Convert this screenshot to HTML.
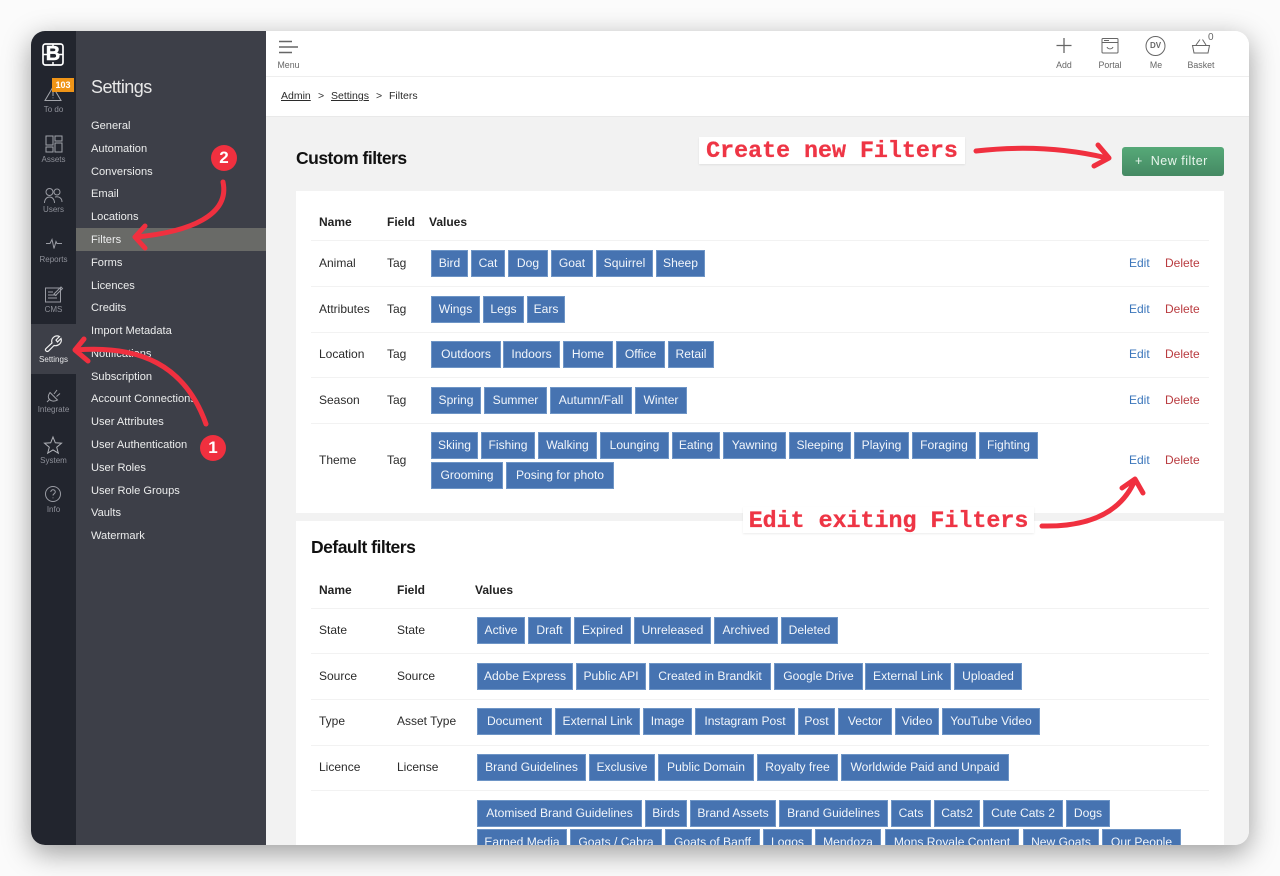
<!DOCTYPE html>
<html><head><meta charset="utf-8"><title>Filters</title>
<style>
*{box-sizing:border-box}
html,body{margin:0;padding:0;width:1280px;height:876px;overflow:hidden;background:#fbfbfb;font-family:"Liberation Sans",sans-serif}
#w{position:absolute;left:31px;top:31px;width:1218px;height:814px;border-radius:14px;box-shadow:0 8px 28px rgba(0,0,0,.38);z-index:0}
#c{position:absolute;left:31px;top:31px;width:1218px;height:814px;border-radius:14px;overflow:hidden;background:#f2f2f2}
#p{position:absolute;left:-31px;top:-31px;width:1280px;height:876px}
.a{position:absolute}
.x{position:absolute;white-space:nowrap;line-height:16px;font-size:12px;color:#2b2b2b}
.n{position:absolute;left:91px;white-space:nowrap;line-height:16px;font-size:11.1px;color:#eceded}
.l{position:absolute;left:31px;width:45px;text-align:center;font-size:8px;line-height:10px;color:#8f919a}
.t{position:absolute;height:27px;background:#4673b1;border:1px solid #6e95c6;color:#f2f6fb;font-size:12.1px;line-height:25px;text-align:center;white-space:nowrap;overflow:hidden}
.h{position:absolute;height:1px;left:311px;width:898px;background:#f2f2f2}
.b{font-weight:bold;color:#222}
.e{color:#3b76bb}.d{color:#b93b3f}
.u{position:absolute;text-align:center;font-size:8.8px;line-height:10px;color:#666}
.r{position:absolute;background:#fff;box-shadow:0 1px 2px rgba(0,0,0,.08);font:bold 23.3px/28px "Liberation Mono",monospace;color:#ee3545;white-space:pre;text-align:center;-webkit-text-stroke:.3px #ee3545}
svg{position:absolute;left:0;top:0;overflow:visible}
</style></head><body>
<div id="w"></div>
<div id="c"><div id="p">
<div class="a" style="left:31px;top:31px;width:45px;height:814px;background:#22252e"></div>
<div class="a" style="left:76px;top:31px;width:190px;height:814px;background:#3d3f48"></div>
<div class="a" style="left:31px;top:324px;width:45px;height:50px;background:#3d3f48"></div>
<div class="a" style="left:76px;top:228px;width:190px;height:23px;background:#696a67"></div>
<div class="a" style="left:266px;top:31px;width:983px;height:46px;background:#fff;border-bottom:1px solid #eeeeee"></div>
<div class="a" style="left:266px;top:77px;width:983px;height:40px;background:#fff;border-bottom:1px solid #e9e9e9"></div>
<div class="a" style="left:296px;top:191px;width:928px;height:322px;background:#fff"></div>
<div class="a" style="left:296px;top:521px;width:928px;height:330px;background:#fff"></div>

<div class="x" style="left:91px;top:76px;font-size:18px;line-height:22px;color:#e8e8e8;letter-spacing:-.55px">Settings</div>
<div class="n" style="top:118px">General</div>
<div class="n" style="top:141px">Automation</div>
<div class="n" style="top:164px">Conversions</div>
<div class="n" style="top:186px">Email</div>
<div class="n" style="top:209px">Locations</div>
<div class="n" style="top:232px">Filters</div>
<div class="n" style="top:255px">Forms</div>
<div class="n" style="top:278px">Licences</div>
<div class="n" style="top:300px">Credits</div>
<div class="n" style="top:323px">Import Metadata</div>
<div class="n" style="top:346px">Notifications</div>
<div class="n" style="top:369px">Subscription</div>
<div class="n" style="top:391px">Account Connections</div>
<div class="n" style="top:414px">User Attributes</div>
<div class="n" style="top:437px">User Authentication</div>
<div class="n" style="top:460px">User Roles</div>
<div class="n" style="top:483px">User Role Groups</div>
<div class="n" style="top:505px">Vaults</div>
<div class="n" style="top:528px">Watermark</div>

<div class="l" style="top:105px">To do</div>
<div class="l" style="top:155px">Assets</div>
<div class="l" style="top:205px">Users</div>
<div class="l" style="top:255px">Reports</div>
<div class="l" style="top:305px">CMS</div>
<div class="l" style="top:355px;color:#e8e8ea">Settings</div>
<div class="l" style="top:405px">Integrate</div>
<div class="l" style="top:456px">System</div>
<div class="l" style="top:505px">Info</div>

<svg width="1280" height="876" fill="none" stroke="#9a9ca4" stroke-width="1">
<rect x="43" y="44" width="20" height="21" rx="2.500" stroke="#fff" stroke-width="1.700"/>
<path d="M43 54.500h4M59 54.500h4M53 44v3M53 62v3" stroke="#fff" stroke-width="1.500"/>
<path d="M53 87l8 13.500h-16zM53 92v4M53 97.500v.8" stroke="#a4a6ac"/>
<path d="M46 136h7v9h-7zM55 136h7v5h-7zM46 147h7v5h-7zM55 143h7v9h-7z" stroke="#a0a2a9"/>
<circle cx="49.500" cy="192" r="3.500"/><circle cx="57" cy="192" r="3"/><path d="M44.500 203c0-8 10-8 10 0M55 197c5-1 7 2 7 5"/>
<path d="M46 243.500h4l2-4 2 9 2-7 1 2h5"/>
<path d="M45.500 288h15v14h-15zM48 292h5M48 295h9M48 298h9M54 294l7-7 1.500 1.500-7 7z"/>
<path d="M52 343C50.500 338.500 55 334.500 59.500 336.500L56 340L57.500 342L61 338.500C62.500 343 58 346.500 54 345.500L48.500 351C46.500 352.500 44.500 350 46 348.500Z" stroke="#f0f0f0" stroke-width="1.200"/>
<path d="M47 402l3-3M50 392.500L57.500 400C54 402 51 401 49.500 399.500S47.500 396 50 392.500ZM54 394l3-4M56.500 396.500l3.500-3" stroke="#a0a2a9"/>
<path d="M53 437l2.300 5.800 6.200.4-4.800 4 1.600 6-5.300-3.300-5.300 3.300 1.600-6-4.800-4 6.200-.4z" stroke="#b0b2b8"/>
<circle cx="53" cy="494" r="7.500"/><path d="M50.800 492c0-3 4.500-3 4.500 0 0 1.700-2.300 1.700-2.300 3.500M53 497.500v.8"/>
<g stroke="#666">
<path d="M279 41.500h13M279 47h19M279 52.500h13" stroke-width="1.400"/>
<path d="M1064 38v15M1056.500 45.500h15" stroke-width="1.300"/>
<rect x="1102" y="38.500" width="16" height="14.500" rx="1"/><path d="M1102 42.500h16M1104 40.500h5M1107 47c1 2.500 5 2.500 6 0" />
<circle cx="1155.500" cy="46" r="9.500"/>
<path d="M1192.500 45.500h17l-1.500 7.500h-14zM1196 45l4-5.500M1206 45l-3.500-5.500"/>
</g>
</svg>
<div class="a" style="left:52px;top:78px;width:22px;height:14px;background:#ef9417;color:#fff;font-size:9px;font-weight:bold;line-height:14px;text-align:center">103</div>
<div class="x" style="left:43px;top:45px;width:20px;text-align:center;color:#fff;font:bold 20px/19px 'Liberation Sans',sans-serif;-webkit-text-stroke:.5px #fff">B</div>

<div class="u" style="left:268px;top:60px;width:41px">Menu</div>
<div class="u" style="left:1044px;top:60px;width:40px">Add</div>
<div class="u" style="left:1090px;top:60px;width:40px">Portal</div>
<div class="u" style="left:1136px;top:60px;width:40px">Me</div>
<div class="u" style="left:1181px;top:60px;width:40px">Basket</div>
<div class="x" style="left:1146px;top:38px;width:19px;text-align:center;font-size:8px;font-weight:bold;color:#666">DV</div>
<div class="x" style="left:1208px;top:30px;font-size:10px;color:#666">0</div>

<div class="x" style="left:281px;top:88px;font-size:10.500px;text-decoration:underline">Admin</div>
<div class="x" style="left:318px;top:88px;font-size:10.500px">&gt;</div>
<div class="x" style="left:331px;top:88px;font-size:10.500px;text-decoration:underline">Settings</div>
<div class="x" style="left:376px;top:88px;font-size:10.500px">&gt;</div>
<div class="x" style="left:389px;top:88px;font-size:10.500px">Filters</div>

<div class="x" style="left:296px;top:148px;font-size:17.500px;line-height:20px;font-weight:bold;color:#111;letter-spacing:-.5px">Custom filters</div>
<div class="a" style="left:1122px;top:147px;width:102px;height:29px;border-radius:3px;background:linear-gradient(#56a978,#458963);color:#e8f5ec;font-size:12.500px;line-height:29px;white-space:pre;padding-left:13px;letter-spacing:.5px">+  New filter</div>

<div class="x b" style="left:319px;top:214px">Name</div><div class="x b" style="left:387px;top:214px">Field</div><div class="x b" style="left:429px;top:214px">Values</div>
<div class="h" style="top:240px"></div><div class="h" style="top:286px"></div><div class="h" style="top:332px"></div><div class="h" style="top:377px"></div><div class="h" style="top:423px"></div>
<div class="x" style="left:319px;top:255px">Animal</div><div class="x" style="left:387px;top:255px">Tag</div><div class="x e" style="left:1129px;top:255px">Edit</div><div class="x d" style="left:1165px;top:255px">Delete</div>
<div class="x" style="left:319px;top:301px">Attributes</div><div class="x" style="left:387px;top:301px">Tag</div><div class="x e" style="left:1129px;top:301px">Edit</div><div class="x d" style="left:1165px;top:301px">Delete</div>
<div class="x" style="left:319px;top:346px">Location</div><div class="x" style="left:387px;top:346px">Tag</div><div class="x e" style="left:1129px;top:346px">Edit</div><div class="x d" style="left:1165px;top:346px">Delete</div>
<div class="x" style="left:319px;top:392px">Season</div><div class="x" style="left:387px;top:392px">Tag</div><div class="x e" style="left:1129px;top:392px">Edit</div><div class="x d" style="left:1165px;top:392px">Delete</div>
<div class="x" style="left:319px;top:452px">Theme</div><div class="x" style="left:387px;top:452px">Tag</div><div class="x e" style="left:1129px;top:452px">Edit</div><div class="x d" style="left:1165px;top:452px">Delete</div>

<span class="t" style="left:431px;top:250px;width:37px">Bird</span><span class="t" style="left:471px;top:250px;width:34px">Cat</span><span class="t" style="left:508px;top:250px;width:40px">Dog</span><span class="t" style="left:551px;top:250px;width:42px">Goat</span><span class="t" style="left:596px;top:250px;width:57px">Squirrel</span><span class="t" style="left:656px;top:250px;width:49px">Sheep</span>
<span class="t" style="left:431px;top:296px;width:49px">Wings</span><span class="t" style="left:483px;top:296px;width:41px">Legs</span><span class="t" style="left:527px;top:296px;width:38px">Ears</span>
<span class="t" style="left:431px;top:341px;width:70px">Outdoors</span><span class="t" style="left:503px;top:341px;width:57px">Indoors</span><span class="t" style="left:563px;top:341px;width:50px">Home</span><span class="t" style="left:616px;top:341px;width:49px">Office</span><span class="t" style="left:668px;top:341px;width:46px">Retail</span>
<span class="t" style="left:431px;top:387px;width:50px">Spring</span><span class="t" style="left:484px;top:387px;width:63px">Summer</span><span class="t" style="left:550px;top:387px;width:82px">Autumn/Fall</span><span class="t" style="left:635px;top:387px;width:52px">Winter</span>
<span class="t" style="left:431px;top:432px;width:47px">Skiing</span><span class="t" style="left:481px;top:432px;width:54px">Fishing</span><span class="t" style="left:538px;top:432px;width:59px">Walking</span><span class="t" style="left:600px;top:432px;width:69px">Lounging</span><span class="t" style="left:672px;top:432px;width:48px">Eating</span><span class="t" style="left:723px;top:432px;width:63px">Yawning</span><span class="t" style="left:789px;top:432px;width:62px">Sleeping</span><span class="t" style="left:854px;top:432px;width:55px">Playing</span><span class="t" style="left:912px;top:432px;width:64px">Foraging</span><span class="t" style="left:979px;top:432px;width:59px">Fighting</span>
<span class="t" style="left:431px;top:462px;width:72px">Grooming</span><span class="t" style="left:506px;top:462px;width:108px">Posing for photo</span>

<div class="x" style="left:311px;top:536px;font-size:17.500px;line-height:22px;font-weight:bold;color:#111;letter-spacing:-.5px">Default filters</div>
<div class="x b" style="left:319px;top:582px">Name</div><div class="x b" style="left:397px;top:582px">Field</div><div class="x b" style="left:475px;top:582px">Values</div>
<div class="h" style="top:608px"></div><div class="h" style="top:653px"></div><div class="h" style="top:699px"></div><div class="h" style="top:745px"></div><div class="h" style="top:790px"></div>
<div class="x" style="left:319px;top:622px">State</div><div class="x" style="left:397px;top:622px">State</div>
<div class="x" style="left:319px;top:668px">Source</div><div class="x" style="left:397px;top:668px">Source</div>
<div class="x" style="left:319px;top:713px">Type</div><div class="x" style="left:397px;top:713px">Asset Type</div>
<div class="x" style="left:319px;top:759px">Licence</div><div class="x" style="left:397px;top:759px">License</div>

<span class="t" style="left:477px;top:617px;width:48px">Active</span><span class="t" style="left:528px;top:617px;width:43px">Draft</span><span class="t" style="left:574px;top:617px;width:57px">Expired</span><span class="t" style="left:634px;top:617px;width:77px">Unreleased</span><span class="t" style="left:714px;top:617px;width:64px">Archived</span><span class="t" style="left:781px;top:617px;width:57px">Deleted</span>
<span class="t" style="left:477px;top:663px;width:96px">Adobe Express</span><span class="t" style="left:576px;top:663px;width:70px">Public API</span><span class="t" style="left:649px;top:663px;width:122px">Created in Brandkit</span><span class="t" style="left:774px;top:663px;width:89px">Google Drive</span><span class="t" style="left:865px;top:663px;width:86px">External Link</span><span class="t" style="left:954px;top:663px;width:68px">Uploaded</span>
<span class="t" style="left:477px;top:708px;width:75px">Document</span><span class="t" style="left:555px;top:708px;width:85px">External Link</span><span class="t" style="left:643px;top:708px;width:49px">Image</span><span class="t" style="left:695px;top:708px;width:100px">Instagram Post</span><span class="t" style="left:798px;top:708px;width:37px">Post</span><span class="t" style="left:838px;top:708px;width:54px">Vector</span><span class="t" style="left:895px;top:708px;width:44px">Video</span><span class="t" style="left:942px;top:708px;width:98px">YouTube Video</span>
<span class="t" style="left:477px;top:754px;width:109px">Brand Guidelines</span><span class="t" style="left:589px;top:754px;width:66px">Exclusive</span><span class="t" style="left:658px;top:754px;width:96px">Public Domain</span><span class="t" style="left:757px;top:754px;width:81px">Royalty free</span><span class="t" style="left:841px;top:754px;width:168px">Worldwide Paid and Unpaid</span>
<span class="t" style="left:477px;top:800px;width:165px">Atomised Brand Guidelines</span><span class="t" style="left:645px;top:800px;width:42px">Birds</span><span class="t" style="left:690px;top:800px;width:86px">Brand Assets</span><span class="t" style="left:779px;top:800px;width:109px">Brand Guidelines</span><span class="t" style="left:891px;top:800px;width:40px">Cats</span><span class="t" style="left:934px;top:800px;width:46px">Cats2</span><span class="t" style="left:983px;top:800px;width:80px">Cute Cats 2</span><span class="t" style="left:1066px;top:800px;width:44px">Dogs</span>
<span class="t" style="left:477px;top:829px;width:90px">Earned Media</span><span class="t" style="left:570px;top:829px;width:92px">Goats / Cabra</span><span class="t" style="left:665px;top:829px;width:95px">Goats of Banff</span><span class="t" style="left:763px;top:829px;width:49px">Logos</span><span class="t" style="left:815px;top:829px;width:66px">Mendoza</span><span class="t" style="left:885px;top:829px;width:134px">Mons Royale Content</span><span class="t" style="left:1023px;top:829px;width:76px">New Goats</span><span class="t" style="left:1102px;top:829px;width:79px">Our People</span>

<div class="r" style="left:699px;top:137px;width:266px;height:27px">Create new Filters</div>
<div class="r" style="left:743px;top:507px;width:291px;height:26px">Edit exiting Filters</div>

<svg width="1280" height="876" fill="none" stroke="#f0303f" stroke-width="5" stroke-linecap="round" stroke-linejoin="round">
<path d="M976 151C1020 146 1065 148 1107 158M1098 145l11 13-15 8"/>
<path d="M223 182C230 215 190 232 136 237M145 226l-10 11 10 11"/>
<path d="M206 424C185 365 140 345 76 350M84 339l-9 11 13 11"/>
<path d="M1042 526C1085 527 1120 515 1135 480M1122 488l13-9 8 14"/>
<circle cx="224" cy="158" r="13" fill="#f0303f" stroke="none"/>
<circle cx="213" cy="448" r="13" fill="#f0303f" stroke="none"/>
</svg>
<div class="x" style="left:214px;top:148px;width:20px;text-align:center;color:#fff;font-size:17px;line-height:20px;font-weight:bold">2</div>
<div class="x" style="left:203px;top:438px;width:20px;text-align:center;color:#fff;font-size:17px;line-height:20px;font-weight:bold">1</div>
</div></div>
</body></html>
